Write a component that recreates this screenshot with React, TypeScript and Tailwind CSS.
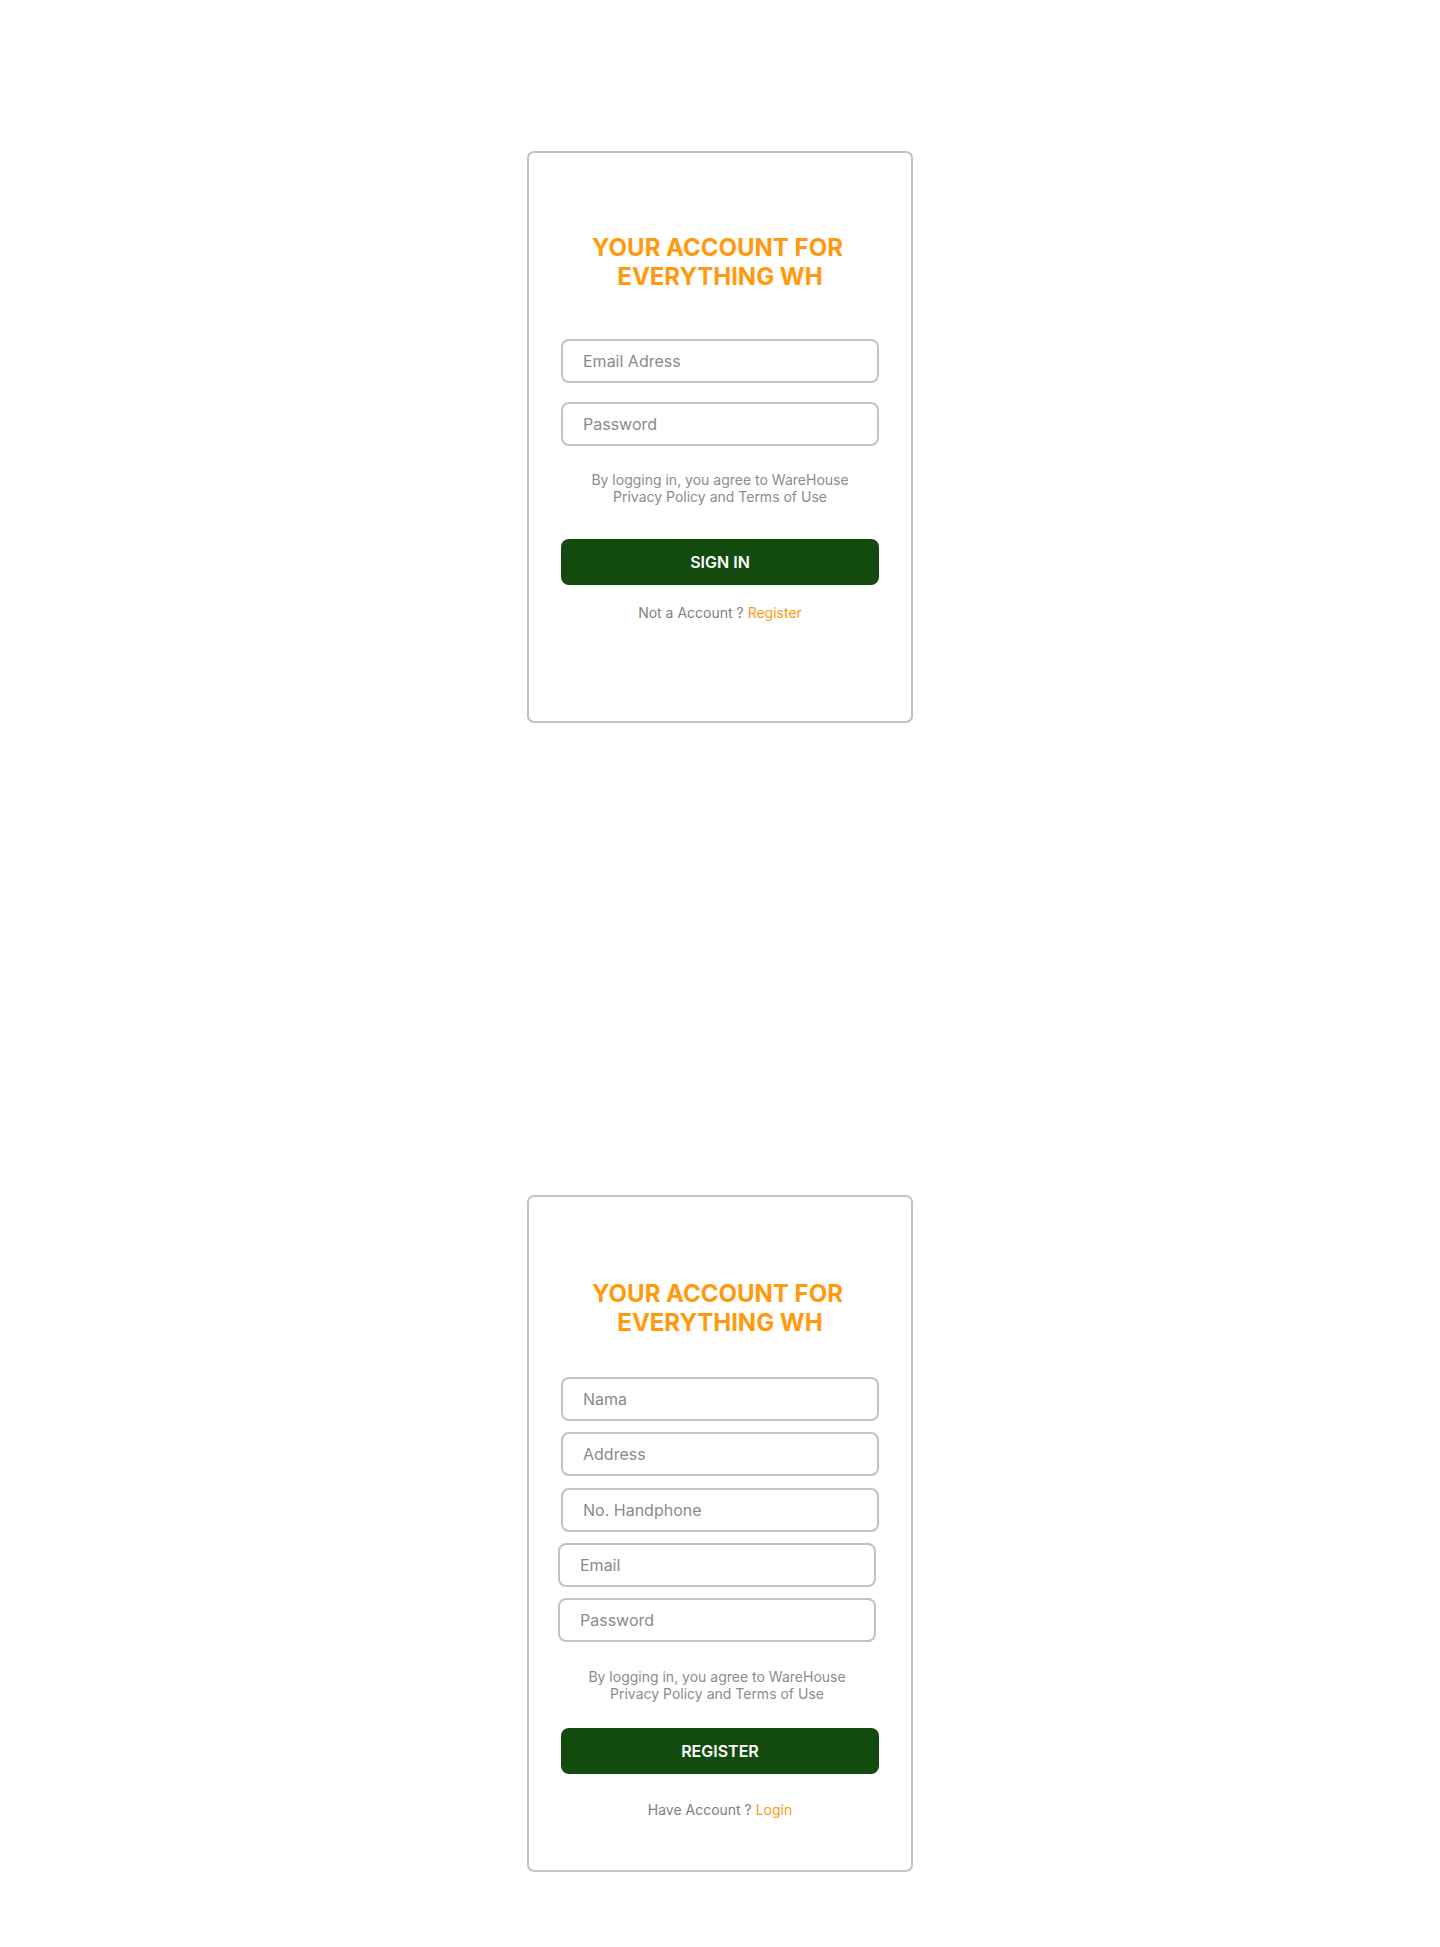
import React from 'react';

const font = { fontFamily: 'Inter, "Noto Sans", sans-serif' };

function Title() {
  return (
    <h1 className="text-center text-[24px] leading-[29px] font-bold text-[#ff9a0e]">
      <span className="block pr-[5px]">YOUR ACCOUNT FOR</span>
      <span className="block">EVERYTHING WH</span>
    </h1>
  );
}

function Field({ placeholder, type = 'text', className = '' }: { placeholder: string; type?: string; className?: string }) {
  return (
    <input
      type={type}
      placeholder={placeholder}
      className={`h-[44px] border-2 border-[#c2c2c2] rounded-[8px] pl-[20px] text-[16px] text-gray-700 placeholder:text-[#8a8a8a] outline-none ${className}`}
    />
  );
}

function Terms({ className = '' }: { className?: string }) {
  return (
    <p className={`text-center text-[14px] leading-[17px] text-[#8c8c8c] ${className}`}>
      By logging in, you agree to WareHouse
      <br />
      Privacy Policy and Terms of Use
    </p>
  );
}

function SubmitButton({ label, className = '' }: { label: string; className?: string }) {
  return (
    <button className={`h-[46px] rounded-[8px] bg-[#134b0e] text-white text-[16px] font-semibold ${className}`}>
      {label}
    </button>
  );
}

export default function App() {
  return (
    <div className="min-h-screen bg-white flex flex-col items-center pt-[151px] pb-[75px]" style={font}>
      {/* Sign in */}
      <div className="w-[386px] h-[572px] border-2 border-[#c2c2c2] rounded-[7px] flex flex-col px-[32px] pt-[80px]">
        <Title />
        <Field placeholder="Email Adress" type="email" className="mt-[48px]" />
        <Field placeholder="Password" type="password" className="mt-[19px]" />
        <Terms className="mt-[25px]" />
        <SubmitButton label="SIGN IN" className="mt-[34px]" />
        <p className="mt-[19px] text-center text-[14px] leading-[17px] text-[#808080]">
          Not a Account ? <a href="#" className="text-[#ff9a0e]">Register</a>
        </p>
      </div>

      {/* Register */}
      <div className="mt-[472px] w-[386px] h-[677px] border-2 border-[#c2c2c2] rounded-[7px] flex flex-col px-[32px] pt-[82px]">
        <Title />
        <Field placeholder="Nama" className="mt-[40px]" />
        <Field placeholder="Address" className="mt-[11px]" />
        <Field placeholder="No. Handphone" className="mt-[12px]" />
        <Field placeholder="Email" type="email" className="mt-[11px] -ml-[3px] mr-[3px]" />
        <Field placeholder="Password" type="password" className="mt-[11px] -ml-[3px] mr-[3px]" />
        <Terms className="mt-[26px] -ml-[3px] mr-[3px]" />
        <SubmitButton label="REGISTER" className="mt-[26px]" />
        <p className="mt-[27px] text-center text-[14px] leading-[17px] text-[#808080]">
          Have Account ? <a href="#" className="text-[#ff9a0e]">Login</a>
        </p>
      </div>
    </div>
  );
}
